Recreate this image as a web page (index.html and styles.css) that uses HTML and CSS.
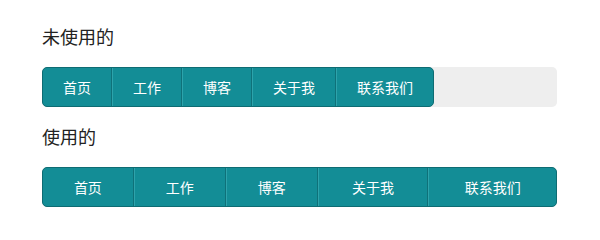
FILE: index.html
```html
<!DOCTYPE html>
<html>

<head>
    <title>导航</title>
    <link rel="stylesheet" href="styles.css">
</head>

<body>
    <div class="demo">
        <h3 class="title">未使用的</h3>
        <div class="nav-box">
            <ul class="nav">
                <li><a href="#">首页</a></li>
                <li><a href="#">工作</a></li>
                <li><a href="#">博客</a></li>
                <li><a href="#">关于我</a></li>
                <li><a href="#">联系我们</a></li>
            </ul>
        </div>

        <h3 class="title">使用的</h3>
        <div class="nav-box">
            <ul class="nav full">
                <li><a href="#">首页</a></li>
                <li><a href="#">工作</a></li>
                <li><a href="#">博客</a></li>
                <li><a href="#">关于我</a></li>
                <li><a href="#">联系我们</a></li>
            </ul>
        </div>
    </div>
</body>

</html>
```

FILE: styles.css
```css
body {
    margin: 0;
    background-color: #fff;
    font-family: "Microsoft YaHei", "Noto Sans CJK SC", sans-serif;
    color: #222;
}

.demo {
    width: 515px;
    padding: 23px 42px;
}

.title {
    font-size: 18px;
    font-weight: normal;
    line-height: 26px;
    margin: 0 0 18px 0;
}

.nav-box {
    background-color: #eee;
    border-radius: 5px;
    height: 40px;
    margin-bottom: 16px;
}

.nav {
    display: inline-flex;
    list-style: none;
    margin: 0;
    padding: 0;
    background-color: #138d96;
    border: 1px solid #0e6c73;
    border-radius: 5px;
    box-sizing: border-box;
    height: 40px;
}

.nav li {
    border-left: 1px solid #2ea3ab;
    border-right: 1px solid #0f7179;
}

.nav li:first-child {
    border-left: none;
}

.nav li:last-child {
    border-right: none;
}

.nav a {
    display: block;
    padding: 0 20px;
    line-height: 38px;
    font-size: 14px;
    color: #fff;
    text-decoration: none;
    text-align: center;
}

.nav.full {
    display: table;
    width: 100%;
    border-collapse: separate;
}

.nav.full li {
    display: table-cell;
}
```
